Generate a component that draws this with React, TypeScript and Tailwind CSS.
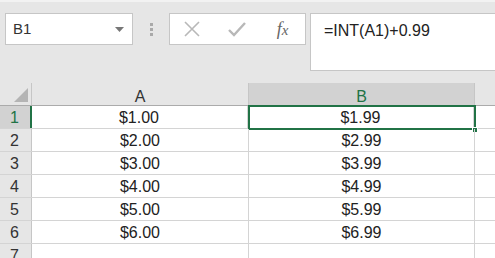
import React from "react";

const rows = [
  ["$1.00", "$1.99"],
  ["$2.00", "$2.99"],
  ["$3.00", "$3.99"],
  ["$4.00", "$4.99"],
  ["$5.00", "$5.99"],
  ["$6.00", "$6.99"],
];

export default function App() {
  return (
    <div
      className="w-[495px] h-[258px] overflow-hidden bg-white text-[#222]"
      style={{ fontFamily: '"Liberation Sans", Arial, sans-serif' }}
    >
      {/* toolbar */}
      <div className="h-[83px] bg-[#e6e6e6] border-t-[2px] border-[#f2f2f2] flex items-start pt-[11px]">
        <div className="ml-[5px] w-[128px] h-[32px] bg-white border border-[#c6c6c6] flex items-center pl-[7px] pr-[8px]">
          <span className="text-[15px] text-[#333] flex-1">B1</span>
          <svg width="9" height="5" viewBox="0 0 9 5">
            <path d="M0 0 L9 0 L4.5 5 Z" fill="#777" />
          </svg>
        </div>
        <div className="w-[36px] h-[32px] flex items-center justify-center">
          <div className="flex flex-col gap-[2px]">
            <div className="w-[3px] h-[3px] bg-[#a9a9a9]" />
            <div className="w-[3px] h-[3px] bg-[#a9a9a9]" />
            <div className="w-[3px] h-[3px] bg-[#a9a9a9]" />
          </div>
        </div>
        <div className="w-[137px] h-[32px] bg-white border border-[#c6c6c6] flex items-center">
          <div className="w-[44px] flex justify-center">
            <svg width="16" height="16" viewBox="0 0 16 16">
              <path d="M1 1 L15 15 M15 1 L1 15" stroke="#b8b8b8" strokeWidth="1.6" />
            </svg>
          </div>
          <div className="w-[46px] flex justify-center">
            <svg width="18" height="16" viewBox="0 0 18 16">
              <path d="M1 9 L6 14 L17 2" stroke="#b8b8b8" strokeWidth="2.4" fill="none" />
            </svg>
          </div>
          <div className="flex-1 flex justify-center">
            <span
              className="text-[18px] italic text-[#666]"
              style={{ fontFamily: '"Liberation Serif", "Times New Roman", serif' }}
            >
              f<span className="text-[15px]">x</span>
            </span>
          </div>
        </div>
        <div className="ml-[4px] flex-1 h-[58px] bg-white border border-[#c6c6c6] border-r-0 pl-[13px] pt-[5px]">
          <span className="text-[16px] text-[#222]">=INT(A1)+0.99</span>
        </div>
      </div>

      {/* header row */}
      <div className="flex h-[23px] bg-[#e6e6e6] border-b border-[#ababab]">
        <div className="w-[32px] relative border-r border-[#c6c6c6]">
          <svg className="absolute right-[3px] bottom-[3px]" width="14" height="14" viewBox="0 0 14 14">
            <path d="M14 0 L14 14 L0 14 Z" fill="#b4b4b4" />
          </svg>
        </div>
        <div className="w-[217px] flex items-end justify-center text-[16px] leading-[17px] text-[#333] border-r border-[#c6c6c6]">
          A
        </div>
        <div className="w-[226px] flex items-end justify-center text-[16px] leading-[17px] text-[#217346] bg-[#d2d2d2] border-r border-[#c6c6c6]">
          B
        </div>
        <div className="flex-1" />
      </div>

      {/* data rows */}
      {rows.map((r, i) => (
        <div key={i} className="flex h-[23px] border-b border-[#d4d4d4] relative">
          <div
            className={
              i === 0
                ? "w-[32px] bg-[#d2d2d2] border-r-2 border-[#217346] text-[#217346] pl-[10px] text-[16px] leading-[23px]"
                : "w-[32px] bg-[#e6e6e6] border-r border-[#c6c6c6] text-[#333] pl-[10px] text-[16px] leading-[23px]"
            }
            style={i === 0 ? { marginRight: -1 } : undefined}
          >
            {i + 1}
          </div>
          <div className="w-[217px] border-r border-[#d4d4d4] text-center text-[16px] leading-[23px]">
            {r[0]}
          </div>
          <div className="w-[226px] border-r border-[#d4d4d4] text-center text-[16px] leading-[23px]">
            {r[1]}
          </div>
          <div className="flex-1" />
          {i === 0 && (
            <>
              <div className="absolute left-[248px] top-[-1px] w-[228px] h-[25px] border-2 border-[#217346] pointer-events-none" />
              <div className="absolute left-[472px] top-[21px] w-[6px] h-[6px] bg-[#217346] border border-white" />
            </>
          )}
        </div>
      ))}
      <div className="flex h-[23px]">
        <div className="w-[32px] bg-[#e6e6e6] border-r border-[#c6c6c6] text-[#333] pl-[10px] text-[16px] leading-[23px]">
          7
        </div>
        <div className="w-[217px] border-r border-[#d4d4d4]" />
        <div className="w-[226px] border-r border-[#d4d4d4]" />
      </div>
    </div>
  );
}
